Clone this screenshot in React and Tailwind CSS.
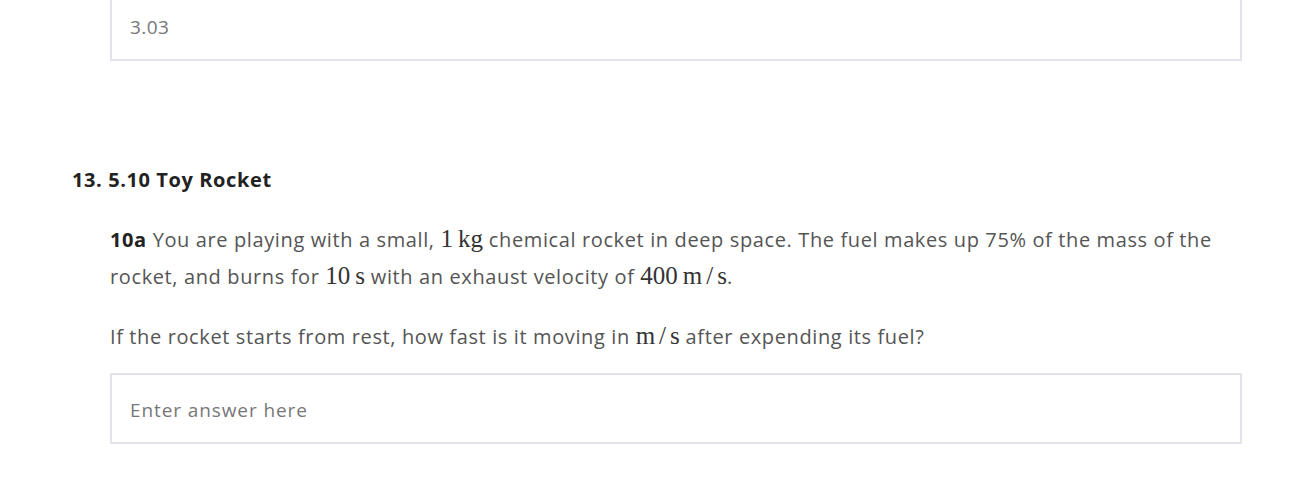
export default function App() {
  const sans = { fontFamily: '"Open Sans", "Noto Sans", sans-serif' };
  const M = ({ children }) => (
    <span className="text-[25px] text-[#333] tracking-normal whitespace-nowrap leading-none" style={{ fontFamily: '"Liberation Serif", "DejaVu Serif", serif' }}>{children}</span>
  );
  const S = () => <span className="mx-[4px]">/</span>;
  return (
    <div className="w-[1297px] h-[485px] overflow-hidden bg-white" style={sans}>
      <div className="ml-[110px] mr-[55px] -mt-[10px] h-[71px] border-2 border-[#e2e2ea] flex items-center pl-[18px] pt-[4px] text-[19px] text-[#777] tracking-[0.4px]">
        3.03
      </div>
      <div className="ml-[72px] mt-[100px] text-[20px] font-bold text-[#222] leading-[38px] tracking-[0.6px]">
        13. 5.10 Toy Rocket
      </div>
      <div className="ml-[110px] mr-[55px] mt-[22px] text-[20px] text-[#555] leading-[37px] tracking-[0.62px]">
        <p>
          <span className="font-bold text-[#222]">10a</span> You are playing with a small, <M>1&thinsp;kg</M> chemical rocket in deep space. The fuel makes up 75% of the mass of the rocket, and burns for <M>10&thinsp;s</M> with an exhaust velocity of <M>400&thinsp;m<S />s</M>.
        </p>
        <p className="mt-[23px]">
          If the rocket starts from rest, how fast is it moving in <M>m<S />s</M> after expending its fuel?
        </p>
      </div>
      <div className="ml-[110px] mr-[55px] mt-[18px] h-[71px] border-2 border-[#e2e2ea] flex items-center pl-[18px] pt-[3px] text-[19px] text-[#777] tracking-[0.9px]">
        Enter answer here
      </div>
    </div>
  );
}
